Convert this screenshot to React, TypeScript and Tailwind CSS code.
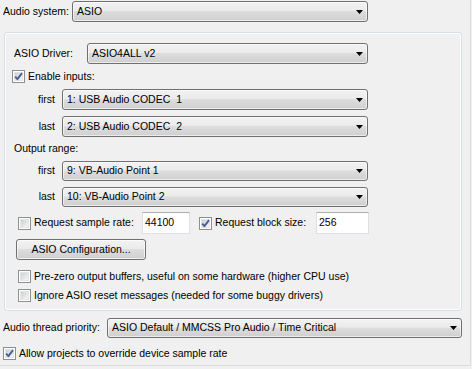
import React from "react";

function Combo({ width, height = 21, text }: { width: number; height?: number; text: string }) {
  return (
    <div
      className="relative flex items-center rounded-[3px] border border-[#707070] pl-[4px] bg-[linear-gradient(#f2f2f2_0%,#ebebeb_45%,#dddddd_50%,#cfcfcf_100%)] shadow-[inset_0_0_0_1px_rgba(255,255,255,0.6)]"
      style={{ width, height }}
    >
      <span className="whitespace-pre">{text}</span>
      <svg width="7" height="4" viewBox="0 0 7 4" className="absolute right-[4px] top-1/2 -translate-y-1/2">
        <path d="M0 0h7L3.5 4z" fill="#000" />
      </svg>
    </div>
  );
}

function Check({ checked = false }: { checked?: boolean }) {
  return (
    <div className="relative w-[13px] h-[13px] shrink-0 border border-[#8e8f8f] bg-white p-px">
      <div className="w-full h-full bg-[linear-gradient(135deg,#cbcfd5,#f7f7f7)] border border-[#e4e4e4]" />
      {checked && (
        <svg width="13" height="13" viewBox="0 0 13 13" className="absolute -left-px -top-px">
          <path d="M3.2 6.6 L5.4 9.2 L10 3.2" fill="none" stroke="#4a5f97" strokeWidth="1.9" strokeLinejoin="round" />
        </svg>
      )}
    </div>
  );
}

function TextBox({ width, text }: { width: number; text: string }) {
  return (
    <div
      className="h-[22px] bg-white border border-[#dbdfe6] border-t-[#abadb3] pl-[2px] pt-[2px] leading-[14px]"
      style={{ width }}
    >
      {text}
    </div>
  );
}

function CheckRow({ checked, label, className }: { checked?: boolean; label: string; className?: string }) {
  return (
    <div className={"flex items-center h-[13px] gap-[3px] " + (className ?? "")}>
      <Check checked={checked} />
      <span className="whitespace-nowrap">{label}</span>
    </div>
  );
}

export default function App() {
  return (
    <div className="w-[472px] h-[369px] bg-[#f0f0f0] text-black text-[10.5px] font-['Liberation_Sans',Arial,sans-serif]">
      <div className="w-[471px] h-[366px] border-r border-b border-[#dcdcdc] pt-px">
        {/* audio system */}
        <div className="flex items-center pl-[3px]">
          <span className="w-[69px] whitespace-nowrap">Audio system:</span>
          <Combo width={296} text="ASIO" />
        </div>

        {/* ASIO group */}
        <div className="mt-[10px] ml-[4px] w-[458px] h-[279px] rounded-[3px] border border-[#d5dfe5] shadow-[inset_0_0_0_1px_#ffffff]">
          <div className="flex items-center mt-[10px] pl-[9px]">
            <span className="w-[73px] whitespace-nowrap">ASIO Driver:</span>
            <Combo width={281} text="ASIO4ALL v2" />
          </div>

          <CheckRow checked label="Enable inputs:" className="mt-[6px] ml-[7px]" />

          <div className="flex items-center mt-[6px]">
            <span className="w-[50px] text-right">first</span>
            <div className="ml-[7px]">
              <Combo width={306} text="1: USB Audio CODEC  1" />
            </div>
          </div>
          <div className="flex items-center mt-[6px]">
            <span className="w-[50px] text-right">last</span>
            <div className="ml-[7px]">
              <Combo width={306} text="2: USB Audio CODEC  2" />
            </div>
          </div>

          <div className="flex items-center h-[13px] mt-[5px] pl-[9px]">Output range:</div>

          <div className="flex items-center mt-[6px]">
            <span className="w-[50px] text-right">first</span>
            <div className="ml-[7px]">
              <Combo width={306} height={20} text="9: VB-Audio Point 1" />
            </div>
          </div>
          <div className="flex items-center mt-[6px]">
            <span className="w-[50px] text-right">last</span>
            <div className="ml-[7px]">
              <Combo width={306} height={20} text="10: VB-Audio Point 2" />
            </div>
          </div>

          <div className="flex items-center mt-[5px] ml-[13px]">
            <Check />
            <span className="ml-[3px] w-[108px] whitespace-nowrap">Request sample rate:</span>
            <TextBox width={48} text="44100" />
            <div className="ml-[9px]">
              <Check checked />
            </div>
            <span className="ml-[3px] w-[101px] whitespace-nowrap">Request block size:</span>
            <TextBox width={53} text="256" />
          </div>

          <button className="block mt-[5px] ml-[11px] w-[130px] h-[21px] rounded-[3px] border border-[#707070] bg-[linear-gradient(#f2f2f2_0%,#ebebeb_45%,#dddddd_50%,#cfcfcf_100%)] shadow-[inset_0_0_0_1px_rgba(255,255,255,0.7)] text-center">
            ASIO Configuration...
          </button>

          <CheckRow label="Pre-zero output buffers, useful on some hardware (higher CPU use)" className="mt-[10px] ml-[13px]" />
          <CheckRow label="Ignore ASIO reset messages (needed for some buggy drivers)" className="mt-[6px] ml-[13px]" />
        </div>

        {/* thread priority */}
        <div className="flex items-center mt-[7px] pl-[3px]">
          <span className="w-[104px] whitespace-nowrap">Audio thread priority:</span>
          <Combo width={355} height={20} text="ASIO Default / MMCSS Pro Audio / Time Critical" />
        </div>

        <CheckRow checked label="Allow projects to override device sample rate" className="mt-[9px] ml-[3px]" />
      </div>
    </div>
  );
}
